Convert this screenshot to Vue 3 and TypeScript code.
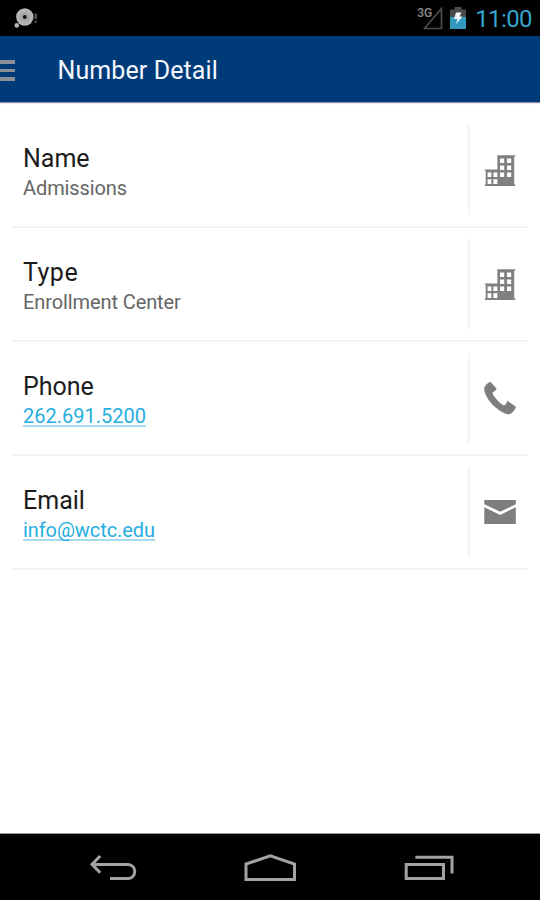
<script setup lang="ts">
type IconName = 'building' | 'phone' | 'mail'

interface DetailRow {
  label: string
  value: string
  icon: IconName
  href?: string
}

const rows: DetailRow[] = [
  { label: 'Name', value: 'Admissions', icon: 'building' },
  { label: 'Type', value: 'Enrollment Center', icon: 'building' },
  { label: 'Phone', value: '262.691.5200', icon: 'phone', href: 'tel:2626915200' },
  { label: 'Email', value: 'info@wctc.edu', icon: 'mail', href: 'mailto:info@wctc.edu' },
]
</script>

<template>
  <div class="screen">
    <div class="status">
      <svg class="status-app" width="26" height="24" viewBox="0 0 26 24">
        <circle cx="10.8" cy="11" r="8.7" fill="#b4b4b4" />
        <circle cx="10.8" cy="11" r="5" fill="#a5a5a5" />
        <circle cx="10.8" cy="11" r="1.9" fill="#111" />
        <circle cx="2.8" cy="19.4" r="2.3" fill="#b4b4b4" />
        <path d="M21.7 7.5v5.5M21.7 14.8v2" stroke="#555" stroke-width="2.4" />
      </svg>
      <div class="status-right">
        <span class="network">3G</span>
        <svg class="signal" width="20" height="23" viewBox="0 0 20 23">
          <path d="M18.5 1.5V21.5H1.5Z" fill="none" stroke="#4c4c4c" stroke-width="1.7" />
        </svg>
        <svg class="battery" width="16" height="22" viewBox="0 0 16 22">
          <path d="M4.5 0h7v2.5H16V10H0V2.5h4.5z" fill="#4a4a4a" />
          <path d="M0 10h16v12H0z" fill="#3298bd" />
          <path d="M6 5.5h5.5L9.5 9.5H12.5L6 17l1.5-5H4z" fill="#f1f7f9" />
        </svg>
        <span class="clock">11:00</span>
      </div>
    </div>

    <header class="bar">
      <div class="menu"><i></i><i></i><i></i></div>
      <h1>Number Detail</h1>
    </header>

    <main class="list">
      <section v-for="row in rows" :key="row.label" class="row">
        <div class="text">
          <div class="label" :class="row.label.toLowerCase()">{{ row.label }}</div>
          <a v-if="row.href" class="value link" :class="row.icon" :href="row.href">{{ row.value }}</a>
          <div v-else class="value plain">{{ row.value }}</div>
        </div>
        <div class="action">
          <svg v-if="row.icon === 'building'" width="32" height="34" viewBox="0 -1.4 32 34" fill="#808080">
            <path fill-rule="evenodd" d="M13.4 .8H31.4V2.2H30.2V30.2H31.4V31.6H.8V30.2H1.7V16.4H.8V15H13.4V2.2H13Z
              M16 4h4.2v4.6h-4.2z M23 4h4.2v4.6h-4.2z
              M16 11h4.2v4.6h-4.2z M23 11h4.2v4.6h-4.2z
              M16 18h4.2v4.6h-4.2z M23 18h4.2v4.6h-4.2z
              M3.6 18h3.8v4.6h-3.8z M9.4 18h4v4.6h-4z
              M3.6 24.9h3.8v4.6h-3.8z M9.4 24.9h4v4.6h-4z" />
          </svg>
          <svg v-else-if="row.icon === 'phone'" class="handset" width="34" height="34" viewBox="0 0 34 34" fill="#7e7e7e">
            <path d="M7.5.8 L13.7 7.8 Q12.7 9.8 9.5 11.5 Q9.4 13.5 12.8 17.6 Q16.5 22.3 21 24.5 Q23.6 23.3 24.4 19.8 L33 25.8 Q31.5 30.6 27 33 Q23 34 16.5 29.5 Q7.5 23.5 3 14.5 Q.7 9.5 1.2 6.4 Q3.4 2.3 7.5.8Z" />
          </svg>
          <svg v-else width="32" height="26" viewBox="0 0 32 26" fill="#7e7e7e">
            <path d="M.3 1H31.8V5.2L16.2 12.7.3 5.2Z" />
            <path d="M.3 8.2 16.2 16 31.8 8.2V25H.3Z" />
          </svg>
        </div>
      </section>
    </main>

    <nav class="nav">
      <svg width="48" height="28" viewBox="0 0 48 28" fill="none" stroke="#a3a3a3" stroke-width="3">
        <path d="M10.2 2 2 10.4 10.2 18.7M2 10.4H38.5a7.1 7.1 0 0 1 0 14.1H20" />
      </svg>
      <svg class="home" width="54" height="30" viewBox="0 0 54 30" fill="none" stroke="#a3a3a3" stroke-width="3">
        <path d="M3 11 27.3 2.8 51.5 11V26.5H3Z" />
      </svg>
      <svg width="52" height="28" viewBox="0 0 52 28" fill="none" stroke="#a3a3a3" stroke-width="3">
        <path d="M2.2 10.4H39.5V24.5H2.2ZM11.3 3.2H48V19.5" />
      </svg>
    </nav>
  </div>
</template>

<style>
body {
  margin: 0;
  background: #fff;
}
</style>

<style scoped>
.screen {
  width: 540px;
  height: 900px;
  display: flex;
  flex-direction: column;
  overflow: hidden;
  background: #fff;
  font-family: Roboto, "Liberation Sans", sans-serif;
}
.status {
  height: 36px;
  flex: none;
  box-sizing: border-box;
  background: #000;
  display: flex;
  justify-content: space-between;
  padding: 6px 8px 0 14px;
}
.status-right {
  display: flex;
  align-items: flex-start;
}
.network {
  font-size: 12px;
  line-height: 14px;
  font-weight: 500;
  color: #8d8d8d;
  margin-right: -9px;
}
.signal {
  margin: 1px 7px 0 0;
}
.battery {
  margin: 1px 9px 0 0;
}
.clock {
  font-size: 24px;
  line-height: 26px;
  color: #35a4ce;
  letter-spacing: -0.6px;
}
.bar {
  height: 67px;
  flex: none;
  box-sizing: border-box;
  background: #003b79;
  border-bottom: 1px solid #8790ad;
  box-shadow: 0 1px 1px #eeeaf2;
  display: flex;
  align-items: center;
}
.menu {
  width: 14.5px;
  display: flex;
  flex-direction: column;
  gap: 5px;
  padding-top: 3px;
}
.menu i {
  height: 3.5px;
  background: #8b8f98;
}
h1 {
  margin: 3px 0 0 43px;
  font-size: 25px;
  line-height: 30px;
  font-weight: 400;
  letter-spacing: 0.1px;
  color: #f4f7ff;
}
.list {
  flex: 1;
  padding: 11px 12px 0;
}
.row {
  height: 114px;
  box-sizing: border-box;
  border-bottom: 2px solid #f4f4f4;
  display: flex;
  justify-content: space-between;
  align-items: center;
}
.text {
  padding: 3px 0 0 11px;
}
.label {
  font-size: 25px;
  line-height: 32px;
  padding-top: 1px;
  color: #1c1c1c;
}
.label.type {
  letter-spacing: 0.5px;
}
.value {
  display: block;
  width: max-content;
  font-size: 20px;
  line-height: 28px;
  margin-top: -1px;
  color: #666;
}
.plain {
  letter-spacing: -0.1px;
}
.link {
  color: #25aee0;
  text-decoration: underline;
  text-decoration-color: #a8daf0;
  text-decoration-thickness: 2px;
  text-decoration-skip-ink: none;
  text-underline-offset: 2px;
}
.link.mail {
  letter-spacing: -0.08px;
}
.action {
  width: 60px;
  height: 90px;
  box-sizing: border-box;
  border-left: 2px solid #f4f4f4;
  display: flex;
  align-items: center;
  padding-left: 14px;
}
.handset {
  margin-left: -1px;
}
.nav {
  height: 67px;
  flex: none;
  box-sizing: border-box;
  background: #000;
  border-top: 1px solid #999;
  display: flex;
  justify-content: space-between;
  align-items: center;
  padding: 2px 84px 0 89.5px;
}
.home {
  margin: 0 1px 0 -1px;
}
</style>
